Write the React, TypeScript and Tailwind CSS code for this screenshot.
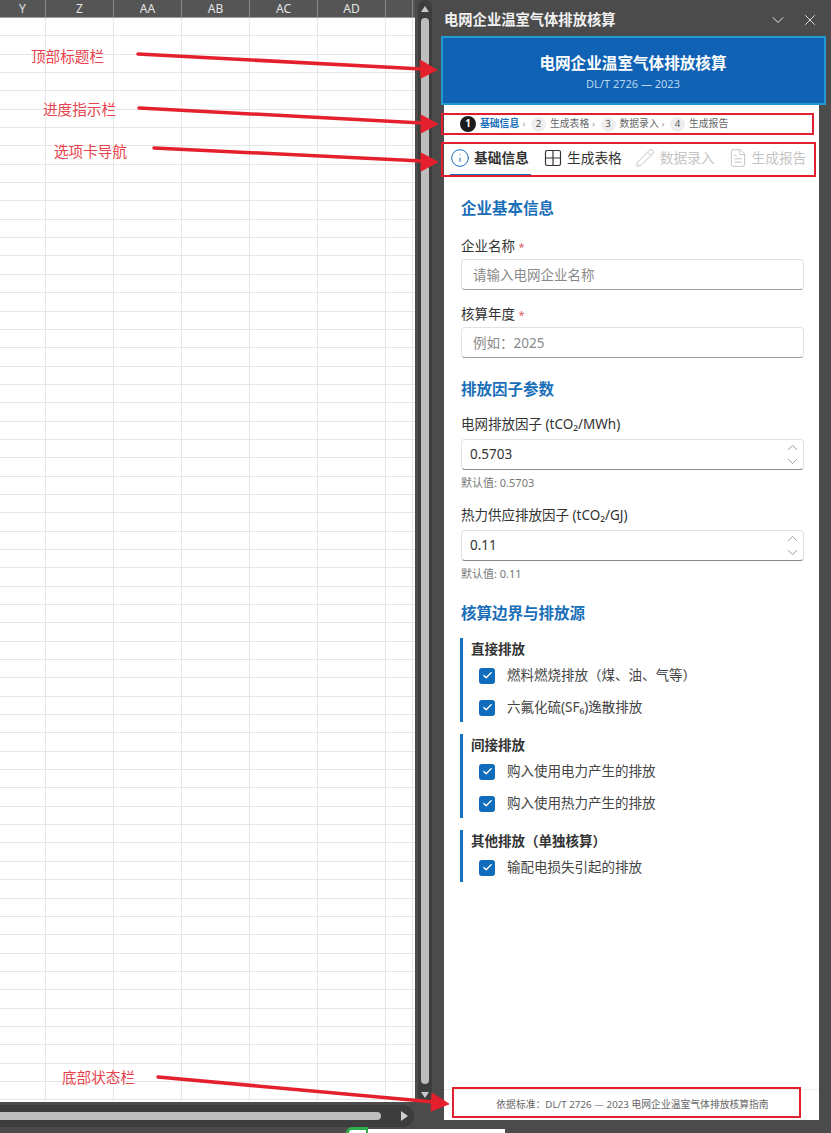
import { Check, ChevronDown, ChevronUp, FileText, Grid2x2, Info, Pencil, X } from "lucide-react";

const columns = [
	{ label: "Y", width: "w-[46px]" },
	{ label: "Z", width: "w-[68px]" },
	{ label: "AA", width: "w-[68px]" },
	{ label: "AB", width: "w-[68px]" },
	{ label: "AC", width: "w-[68px]" },
	{ label: "AD", width: "w-[68px]" },
	{ label: "", width: "w-[27px]" },
];

const rows = Array.from({ length: 59 }, (_, i) => i);

const steps = [
	{ n: "2", label: "生成表格" },
	{ n: "3", label: "数据录入" },
	{ n: "4", label: "生成报告" },
];

const groups = [
	{ title: "直接排放", items: ["燃料燃烧排放（煤、油、气等）", "六氟化硫(SF₆)逸散排放"] },
	{ title: "间接排放", items: ["购入使用电力产生的排放", "购入使用热力产生的排放"] },
	{ title: "其他排放（单独核算）", items: ["输配电损失引起的排放"] },
];

const notes = [
	{ text: "顶部标题栏", pos: "left-[31px] top-[46px]" },
	{ text: "进度指示栏", pos: "left-[43px] top-[99px]" },
	{ text: "选项卡导航", pos: "left-[54px] top-[141px]" },
	{ text: "底部状态栏", pos: "left-[62px] top-[1067px]" },
];

const arrows = [
	{ x1: 138, y1: 54, x2: 422, y2: 69, head: "437,70 420,60 421,78" },
	{ x1: 139, y1: 108, x2: 422, y2: 123, head: "438,124 421,115 421,133" },
	{ x1: 154, y1: 148, x2: 422, y2: 161, head: "438,162 421,153 421,171" },
	{ x1: 158, y1: 1077, x2: 434, y2: 1102, head: "449,1104 432,1093 431,1111" },
];

function Sheet() {
	return (
		<div className="flex-1 flex flex-col w-[413px] overflow-hidden">
			<div className="flex h-[18px] shrink-0 bg-[#555555] border-b border-[#9a9a9a]">
				{columns.map((c) => (
					<div
						key={c.label || "end"}
						className={`${c.width} shrink-0 border-r border-[#8a8a8a] text-center text-[12px] leading-[18px] text-[#e4e4e4]`}
					>
						{c.label}
					</div>
				))}
			</div>
			<div className="flex-1 bg-white overflow-hidden">
				{rows.map((r) => (
					<div key={r} className="flex h-[18.35px] border-b border-[#e6e6e6]">
						{columns.map((c) => (
							<div key={c.label || "end"} className={`${c.width} shrink-0 border-r border-[#e6e6e6]`} />
						))}
					</div>
				))}
			</div>
		</div>
	);
}

function VerticalScroll() {
	return (
		<div className="ml-[3px] w-[14px] rounded-full bg-[#3d3d3d] flex flex-col items-center pt-[6px] pb-[4px]">
			<div className="h-0 w-0 border-x-[4px] border-b-[6px] border-x-transparent border-b-[#c8c8c8]" />
			<div className="mt-[6px] flex-1 w-[8px] rounded-full bg-[#bdbdbd]" />
			<div className="mt-[8px] h-0 w-0 border-x-[4px] border-t-[6px] border-x-transparent border-t-[#c8c8c8]" />
		</div>
	);
}

function HorizontalScroll() {
	return (
		<div className="mt-[3px] flex h-[22px] w-[414px] items-center rounded-r-full bg-[#3d3d3d] pr-[4px]">
			<div className="h-[8px] w-[381px] rounded-r-full bg-[#bdbdbd]" />
			<div className="ml-[20px] h-0 w-0 border-y-[5px] border-l-[7px] border-y-transparent border-l-[#d0d0d0]" />
		</div>
	);
}

function Required({ label }: { label: string }) {
	return (
		<div className="text-[13.5px] leading-[20px] text-[#333333]">
			{label} <span className="text-[11px] text-[#d9606a]">*</span>
		</div>
	);
}

function TextBox({ placeholder }: { placeholder: string }) {
	return (
		<div className="mt-[2px] h-[31px] rounded-[4px] border border-[#e2e2e2] border-b-[#a0a0a0] px-[11px] text-[13.5px] leading-[30px] text-[#8a8a8a]">
			{placeholder}
		</div>
	);
}

function NumberBox({ value }: { value: string }) {
	return (
		<div className="mt-[5px] flex h-[31px] items-center justify-between rounded-[4px] border border-[#e2e2e2] border-b-[#8a8a8a] pl-[8px] pr-[2px] text-[13.5px] text-[#333333]">
			<span>{value}</span>
			<div className="flex flex-col text-[#777777]">
				<ChevronUp size={17} strokeWidth={1} />
				<ChevronDown size={17} strokeWidth={1} className="-mt-[3px]" />
			</div>
		</div>
	);
}

function SectionTitle({ children, className }: { children: string; className: string }) {
	return <h2 className={`text-[15.5px] leading-[22px] font-bold text-[#1a6fb8] ${className}`}>{children}</h2>;
}

function Hint({ children }: { children: string }) {
	return <div className="mt-[5px] text-[11px] leading-[16px] text-[#777777]">{children}</div>;
}

function Progress() {
	return (
		<div className="flex h-[18px] items-center pl-[16px] text-[9.8px] text-[#666666]">
			<span className="flex h-[16px] w-[16px] items-center justify-center rounded-full bg-[#1b1b1b] font-bold text-white">1</span>
			<span className="ml-[4px] w-[40px] font-semibold text-[#1a6fb8]">基础信息</span>
			{steps.map((s) => (
				<span key={s.n} className="flex items-center">
					<span className="w-[11px] pr-[3px] text-center text-[#999999]">›</span>
					<span className="flex h-[15px] w-[15px] items-center justify-center rounded-full bg-[#eeeeee] text-[#555555]">{s.n}</span>
					<span className="ml-[4px] w-[39.5px]">{s.label}</span>
				</span>
			))}
		</div>
	);
}

function Tabs() {
	return (
		<div className="mt-[10px] flex h-[36px] text-[13.7px] text-[#333333]">
			<div className="ml-[6px] flex h-[33px] w-[81px] items-center gap-[4px] border-b-[2px] border-[#1a6fb8] pb-[1px] font-semibold">
				<Info size={20} strokeWidth={1.2} className="text-[#1a6fb8]" />
				<span>基础信息</span>
			</div>
			<div className="ml-[11.5px] flex h-[33px] items-center gap-[4.5px] pb-[3px]">
				<Grid2x2 size={20} strokeWidth={1.4} />
				<span>生成表格</span>
			</div>
			<div className="ml-[13px] flex h-[33px] items-center gap-[5px] pb-[3px] text-[#c4c4c4]">
				<Pencil size={20} strokeWidth={1.2} />
				<span>数据录入</span>
			</div>
			<div className="ml-[13px] flex h-[33px] items-center gap-[4px] pb-[3px] text-[#c4c4c4]">
				<FileText size={20} strokeWidth={1.2} />
				<span>生成报告</span>
			</div>
		</div>
	);
}

function BoundaryGroup({ title, items }: { title: string; items: string[] }) {
	return (
		<div className="-ml-[1px] mb-[12px] border-l-[3px] border-[#1a6fb8] pl-[8px]">
			<div className="h-[22px] text-[13.5px] leading-[22px] font-bold text-[#333333]">{title}</div>
			<div className="flex flex-col gap-[5px] pt-[2px] pb-[1px]">
				{items.map((item) => (
					<div key={item} className="flex h-[27px] items-center pl-[8px]">
						<span className="flex h-[16px] w-[16px] items-center justify-center rounded-[3px] bg-[#0f6cbd] text-white">
							<Check size={11} strokeWidth={3} />
						</span>
						<span className="ml-[12px] text-[13.5px] text-[#444444]">{item}</span>
					</div>
				))}
			</div>
		</div>
	);
}

function Panel() {
	return (
		<div className="ml-[12px] flex h-[1120px] w-[375px] flex-col">
			<div className="flex h-[37px] shrink-0 items-center justify-between pt-[3px] text-white">
				<span className="text-[14.3px] font-bold text-[#f2f2f2]">电网企业温室气体排放核算</span>
				<div className="flex items-center gap-[13px] text-[#e8e8e8]">
					<ChevronDown size={20} strokeWidth={1.2} />
					<X size={18} strokeWidth={1.2} />
				</div>
			</div>
			<div className="-ml-[3px] -mr-[6px] flex h-[68px] shrink-0 flex-col items-center justify-center bg-[#0f62b4] pb-[1px]">
				<div className="text-[15.6px] leading-[24px] font-bold text-white">电网企业温室气体排放核算</div>
				<div className="mt-[2px] text-[11px] leading-[14px] text-[#b9d6f2]">DL/T 2726 — 2023</div>
			</div>
			<div className="flex flex-1 flex-col bg-white pt-[10px]">
				<Progress />
				<Tabs />
				<div className="flex-1 pl-[17px] pr-[15px]">
					<SectionTitle className="mt-[18px]">企业基本信息</SectionTitle>
					<div className="mt-[17px]">
						<Required label="企业名称" />
						<TextBox placeholder="请输入电网企业名称" />
					</div>
					<div className="mt-[14px]">
						<Required label="核算年度" />
						<TextBox placeholder="例如：2025" />
					</div>
					<SectionTitle className="mt-[20px]">排放因子参数</SectionTitle>
					<div className="mt-[14px] text-[13.5px] leading-[20px] text-[#333333]">电网排放因子 (tCO₂/MWh)</div>
					<NumberBox value="0.5703" />
					<Hint>默认值: 0.5703</Hint>
					<div className="mt-[14px] text-[13.5px] leading-[20px] text-[#333333]">热力供应排放因子 (tCO₂/GJ)</div>
					<NumberBox value="0.11" />
					<Hint>默认值: 0.11</Hint>
					<SectionTitle className="mt-[20px] mb-[14px]">核算边界与排放源</SectionTitle>
					{groups.map((g) => (
						<BoundaryGroup key={g.title} title={g.title} items={g.items} />
					))}
				</div>
				<div className="flex h-[31px] shrink-0 items-center justify-center border-t border-[#eeeeee] pl-[2px] text-[9.8px] text-[#666666]">
					依据标准：DL/T 2726 — 2023 电网企业温室气体排放核算指南
				</div>
			</div>
		</div>
	);
}

function Annotations() {
	return (
		<>
			<div className="absolute left-[441px] top-[36px] h-[69px] w-[385px] border-2 border-[#1f9bd1]" />
			<div className="absolute left-[441px] top-[113px] h-[22px] w-[373px] border-2 border-[#e0202c]" />
			<div className="absolute left-[441px] top-[142px] h-[35px] w-[375px] border-2 border-[#e0202c]" />
			<div className="absolute left-[452px] top-[1087px] h-[31px] w-[349px] border-2 border-[#e0202c]" />
			{notes.map((n) => (
				<span key={n.text} className={`absolute ${n.pos} text-[14.6px] leading-[20px] text-[#e8434c]`}>
					{n.text}
				</span>
			))}
			<svg className="absolute left-0 top-0" width={831} height={1133}>
				{arrows.map((a) => (
					<g key={a.head} fill="#e4202c" stroke="#e4202c">
						<line x1={a.x1} y1={a.y1} x2={a.x2} y2={a.y2} strokeWidth={3.5} strokeLinecap="round" />
						<polygon points={a.head} strokeWidth={1} />
					</g>
				))}
			</svg>
		</>
	);
}

export default function App() {
	return (
		<div className="relative flex h-[1133px] w-[831px] overflow-hidden bg-[#4b4b4b] font-['Noto_Sans','Noto_Sans_CJK_SC',sans-serif]">
			<div className="flex w-[432px] shrink-0 flex-col">
				<div className="flex h-[1102px]">
					<Sheet />
					<VerticalScroll />
				</div>
				<HorizontalScroll />
			</div>
			<Panel />
			<div className="absolute bottom-0 left-[368px] h-[4px] w-[137px] bg-white" />
			<div className="absolute bottom-0 left-[346px] h-[6px] w-[22px] rounded-tl-[8px] border-t-[3px] border-l-[3px] border-r-[2px] border-[#2fae4e] bg-white" />
			<Annotations />
		</div>
	);
}
